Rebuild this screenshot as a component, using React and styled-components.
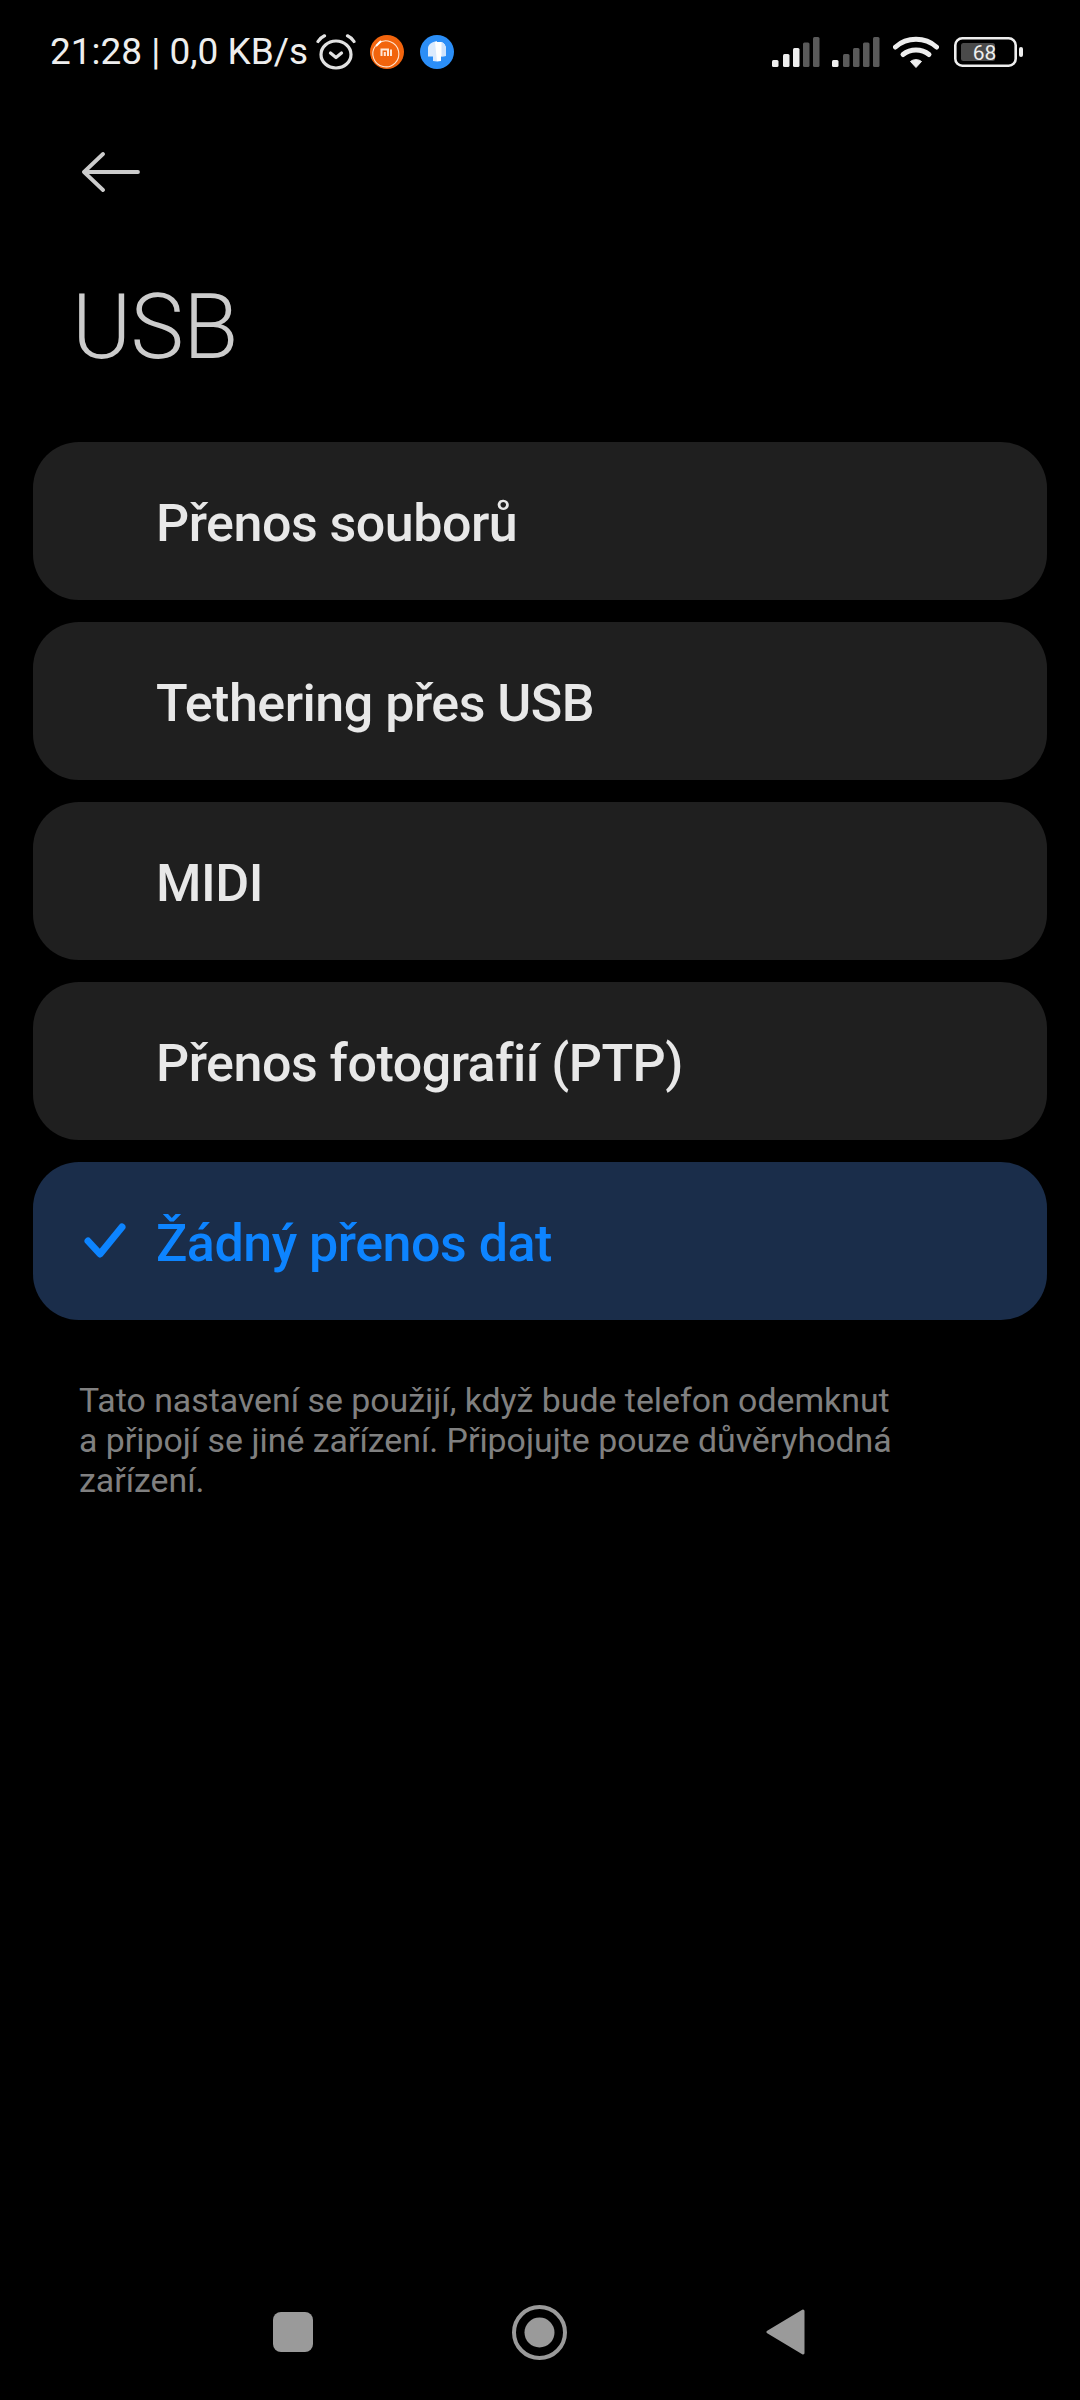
import React from "react";
import styled, { createGlobalStyle } from "styled-components";

const GlobalStyle = createGlobalStyle`
  html, body {
    margin: 0;
    padding: 0;
    background: #000000;
  }
`;

const Screen = styled.div`
  width: 1080px;
  height: 2400px;
  background: #000000;
  display: flex;
  flex-direction: column;
  font-family: Roboto, "Noto Sans", sans-serif;
  overflow: hidden;
`;

const StatusBar = styled.div`
  height: 104px;
  padding: 0 57px 0 50px;
  display: flex;
  align-items: center;
  justify-content: space-between;
  box-sizing: border-box;
`;

const StatusGroup = styled.div`
  display: flex;
  align-items: center;
`;

const StatusText = styled.span`
  font-size: 37px;
  line-height: 44px;
  color: #eeeeee;
  white-space: nowrap;
`;

const StatusIcon = styled.svg`
  display: block;
  flex: none;
  margin-left: ${(p) => p.$gap || 0}px;
`;

const BackRow = styled.div`
  height: 76px;
  margin-top: 30px;
  padding-left: 82px;
  display: flex;
  align-items: center;
`;

const Title = styled.h1`
  margin: 65px 0 0 72px;
  font-size: 90px;
  line-height: 106px;
  font-weight: 300;
  letter-spacing: -0.6px;
  color: #cccccc;
`;

const OptionList = styled.div`
  margin: 61px 33px 0;
  display: flex;
  flex-direction: column;
  gap: 22px;
`;

const Option = styled.div`
  height: 158px;
  border-radius: 46px;
  background: ${(p) => (p.$selected ? "#1a2d4a" : "#1f1f1f")};
  color: ${(p) => (p.$selected ? "#0d84ff" : "#e8e8e8")};
  display: flex;
  align-items: center;
  position: relative;
  padding-left: 123px;
`;

const OptionLabel = styled.span`
  font-size: 52px;
  line-height: 60px;
  font-weight: 500;
  letter-spacing: -0.5px;
  transform: translateY(3px);
`;

const CheckMark = styled.svg`
  position: absolute;
  left: 51px;
  top: 61px;
`;

const Hint = styled.p`
  margin: 61px 0 0 79px;
  width: 822px;
  font-size: 33.85px;
  line-height: 40px;
  color: #808080;
`;

const Spacer = styled.div`
  flex: 1;
`;

const NavBar = styled.div`
  height: 114px;
  padding: 0 2px 22px 0;
  display: flex;
  align-items: center;
  justify-content: center;
  gap: 199px;
  box-sizing: border-box;
`;

const AlarmIcon = () => (
  <StatusIcon $gap={8} width="40" height="36" viewBox="0 0 40 36">
    <ellipse cx="20" cy="20.5" rx="15" ry="13.5" fill="none" stroke="#e2e2e2" strokeWidth="3.2" />
    <path d="M14.5 19l5.5 4.500 5.500-4.500" fill="none" stroke="#e2e2e2" strokeWidth="3.2" strokeLinecap="round" strokeLinejoin="round" />
    <path d="M2 7.500C3.500 5 5.500 3.200 8.500 1.800M38 7.500C36.500 5 34.500 3.200 31.500 1.800" fill="none" stroke="#e2e2e2" strokeWidth="3.2" strokeLinecap="round" />
  </StatusIcon>
);

const MiIcon = () => (
  <StatusIcon $gap={14} width="34" height="34" viewBox="0 0 34 34">
    <circle cx="17" cy="17" r="17" fill="#f2640d" />
    <path d="M8 8.500A13 13 0 1 1 5.500 11" fill="none" stroke="#ffe3cf" strokeWidth="1.100" />
    <path d="M6.500 10.500L10.500 6.500" stroke="#ffffff" strokeWidth="2" strokeLinecap="round" />
    <path d="M11.500 21v-6.500h6.500V21M14.800 17v4M21 14.500V21" fill="none" stroke="#ffe6d5" strokeWidth="2" />
  </StatusIcon>
);

const CloudIcon = () => (
  <StatusIcon $gap={16} width="34" height="34" viewBox="0 0 34 34">
    <circle cx="17" cy="17" r="17" fill="#2b8ef7" />
    <path d="M15 6.500C11 7.500 8 10 8 13.500V21.500h5v4.500l4 .5V6z" fill="#dcebfd" />
    <path d="M15 7h6.500c2.500 1.200 4.500 3.500 4.500 6.500v7.500l-5 .5v4.500l-4 .5z" fill="#ffffff" />
    <path d="M21.500 7c2.500 1.200 4.500 3.500 4.500 6.500v7.500l-4.500.5z" fill="#cfe3fc" />
  </StatusIcon>
);

const signalBars = [
  [0, 23, 7],
  [11, 17, 13],
  [21, 11, 19],
  [31, 5.5, 24.5],
  [41, 0, 30],
];

const SignalIcon = ({ active, gap }) => (
  <StatusIcon $gap={gap} width="48" height="30" viewBox="0 0 48 30">
    {signalBars.map(([x, y, h], i) => (
      <rect key={x} x={x} y={y} width="6.5" height={h} rx="1.5" fill={i < active ? "#eeeeee" : "#5a5a5a"} />
    ))}
  </StatusIcon>
);

const WifiIcon = () => (
  <StatusIcon $gap={13} width="46" height="33" viewBox="0 0 46 33">
    <path d="M2.500 11C14 .8 32 .8 43.500 11" fill="none" stroke="#eeeeee" strokeWidth="5" strokeLinecap="round" />
    <path d="M10 18.500C17.500 12.500 28.500 12.500 36 18.500" fill="none" stroke="#eeeeee" strokeWidth="5" strokeLinecap="round" />
    <path d="M17.500 25.500c3-2.500 8-2.500 11 0L23 31.500z" fill="#eeeeee" stroke="#eeeeee" strokeWidth="1" strokeLinejoin="round" />
  </StatusIcon>
);

const BatteryIcon = () => (
  <StatusIcon $gap={15} width="69" height="30" viewBox="0 0 69 30">
    <rect x="1.300" y="1.300" width="60.400" height="27.400" rx="7" fill="none" stroke="#eeeeee" strokeWidth="2.600" />
    <rect x="7" y="6" width="34" height="18" rx="2.500" fill="#4a4a4a" />
    <rect x="65" y="10" width="4" height="10" rx="2" fill="#eeeeee" />
    <text x="30.500" y="23" textAnchor="middle" fontFamily="Roboto, sans-serif" fontSize="21" fill="#eeeeee">68</text>
  </StatusIcon>
);

const BackArrow = () => (
  <svg width="58" height="40" viewBox="0 0 58 40">
    <path d="M2 20H56M21 2L2 20l19 18" fill="none" stroke="#cccccc" strokeWidth="3.800" strokeLinecap="round" strokeLinejoin="round" />
  </svg>
);

const options = [
  { label: "Přenos souborů" },
  { label: "Tethering přes USB" },
  { label: "MIDI" },
  { label: "Přenos fotografií (PTP)" },
  { label: "Žádný přenos dat", selected: true },
];

const App = () => {
  return (
    <Screen>
      <GlobalStyle />
      <StatusBar>
        <StatusGroup>
          <StatusText>21:28 | 0,0 KB/s</StatusText>
          <AlarmIcon />
          <MiIcon />
          <CloudIcon />
        </StatusGroup>
        <StatusGroup>
          <SignalIcon active={3} />
          <SignalIcon active={1} gap={12} />
          <WifiIcon />
          <BatteryIcon />
        </StatusGroup>
      </StatusBar>
      <BackRow>
        <BackArrow />
      </BackRow>
      <Title>USB</Title>
      <OptionList>
        {options.map((o) => (
          <Option key={o.label} $selected={o.selected}>
            {o.selected && (
              <CheckMark width="42" height="36" viewBox="0 0 42 36">
                <path d="M4 18l12 13L38 4" fill="none" stroke="#0d84ff" strokeWidth="7" strokeLinecap="round" strokeLinejoin="round" />
              </CheckMark>
            )}
            <OptionLabel>{o.label}</OptionLabel>
          </Option>
        ))}
      </OptionList>
      <Hint>
        Tato nastavení se použijí, když bude telefon odemknut a připojí se jiné zařízení. Připojujte pouze důvěryhodná zařízení.
      </Hint>
      <Spacer />
      <NavBar>
        <svg width="40" height="40" viewBox="0 0 40 40">
          <rect width="40" height="40" rx="8" fill="#9a9a9a" />
        </svg>
        <svg width="55" height="55" viewBox="0 0 55 55">
          <circle cx="27.500" cy="27.500" r="25.500" fill="none" stroke="#9a9a9a" strokeWidth="4" />
          <circle cx="27.500" cy="27.500" r="15" fill="#9a9a9a" />
        </svg>
        <svg width="39" height="46" viewBox="0 0 39 46">
          <path d="M37 2L2 23l35 21z" fill="#9a9a9a" stroke="#9a9a9a" strokeWidth="3" strokeLinejoin="round" />
        </svg>
      </NavBar>
    </Screen>
  );
};

export default App;
